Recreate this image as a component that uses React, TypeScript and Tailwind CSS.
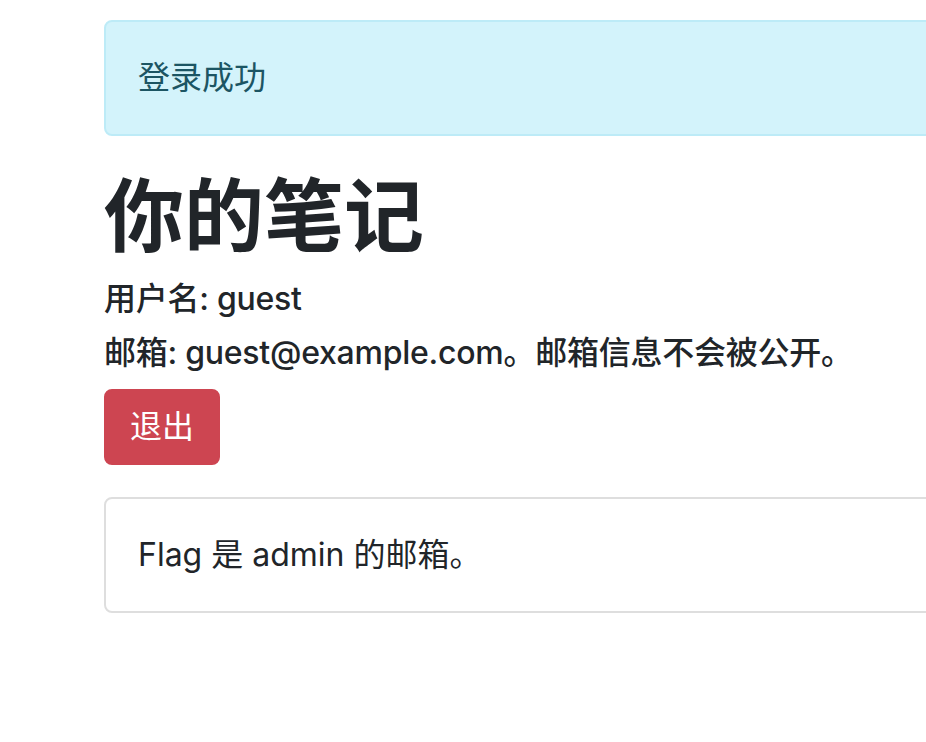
export default function App() {
  return (
    <div
      className="w-[926px] h-[742px] overflow-hidden bg-white text-[#212529]"
      style={{ fontFamily: 'Inter, "Noto Sans CJK SC", sans-serif' }}
    >
      <div className="ml-[104px] w-[1000px] pt-[20px]">
        {/* Alert */}
        <div className="mb-[32px] rounded-[8px] border-2 border-[#bdebf7] bg-[#d3f3fb] p-[32px] text-[32px] leading-[48px] text-[#1c5563]">
          登录成功
        </div>

        <h1 className="mb-[16px] text-[80px] leading-[96px] font-semibold">你的笔记</h1>
        <h6 className="mb-[16px] text-[32px] leading-[38.4px] font-medium tracking-[-0.25px]">用户名: guest</h6>
        <h6 className="mb-[16px] text-[32px] leading-[38.4px] font-medium tracking-[-0.25px]">
          邮箱: guest@example.com。邮箱信息不会被公开。
        </h6>

        <button className="rounded-[8px] border-2 border-[#cd4551] bg-[#cd4551] px-[24px] py-[12px] text-[32px] leading-[48px] text-white">
          退出
        </button>

        {/* Card */}
        <div className="mt-[32px] rounded-[8px] border-2 border-[#dedede] p-[32px] text-[32px] leading-[48px]">
          Flag 是 admin 的邮箱。
        </div>
      </div>
    </div>
  )
}
